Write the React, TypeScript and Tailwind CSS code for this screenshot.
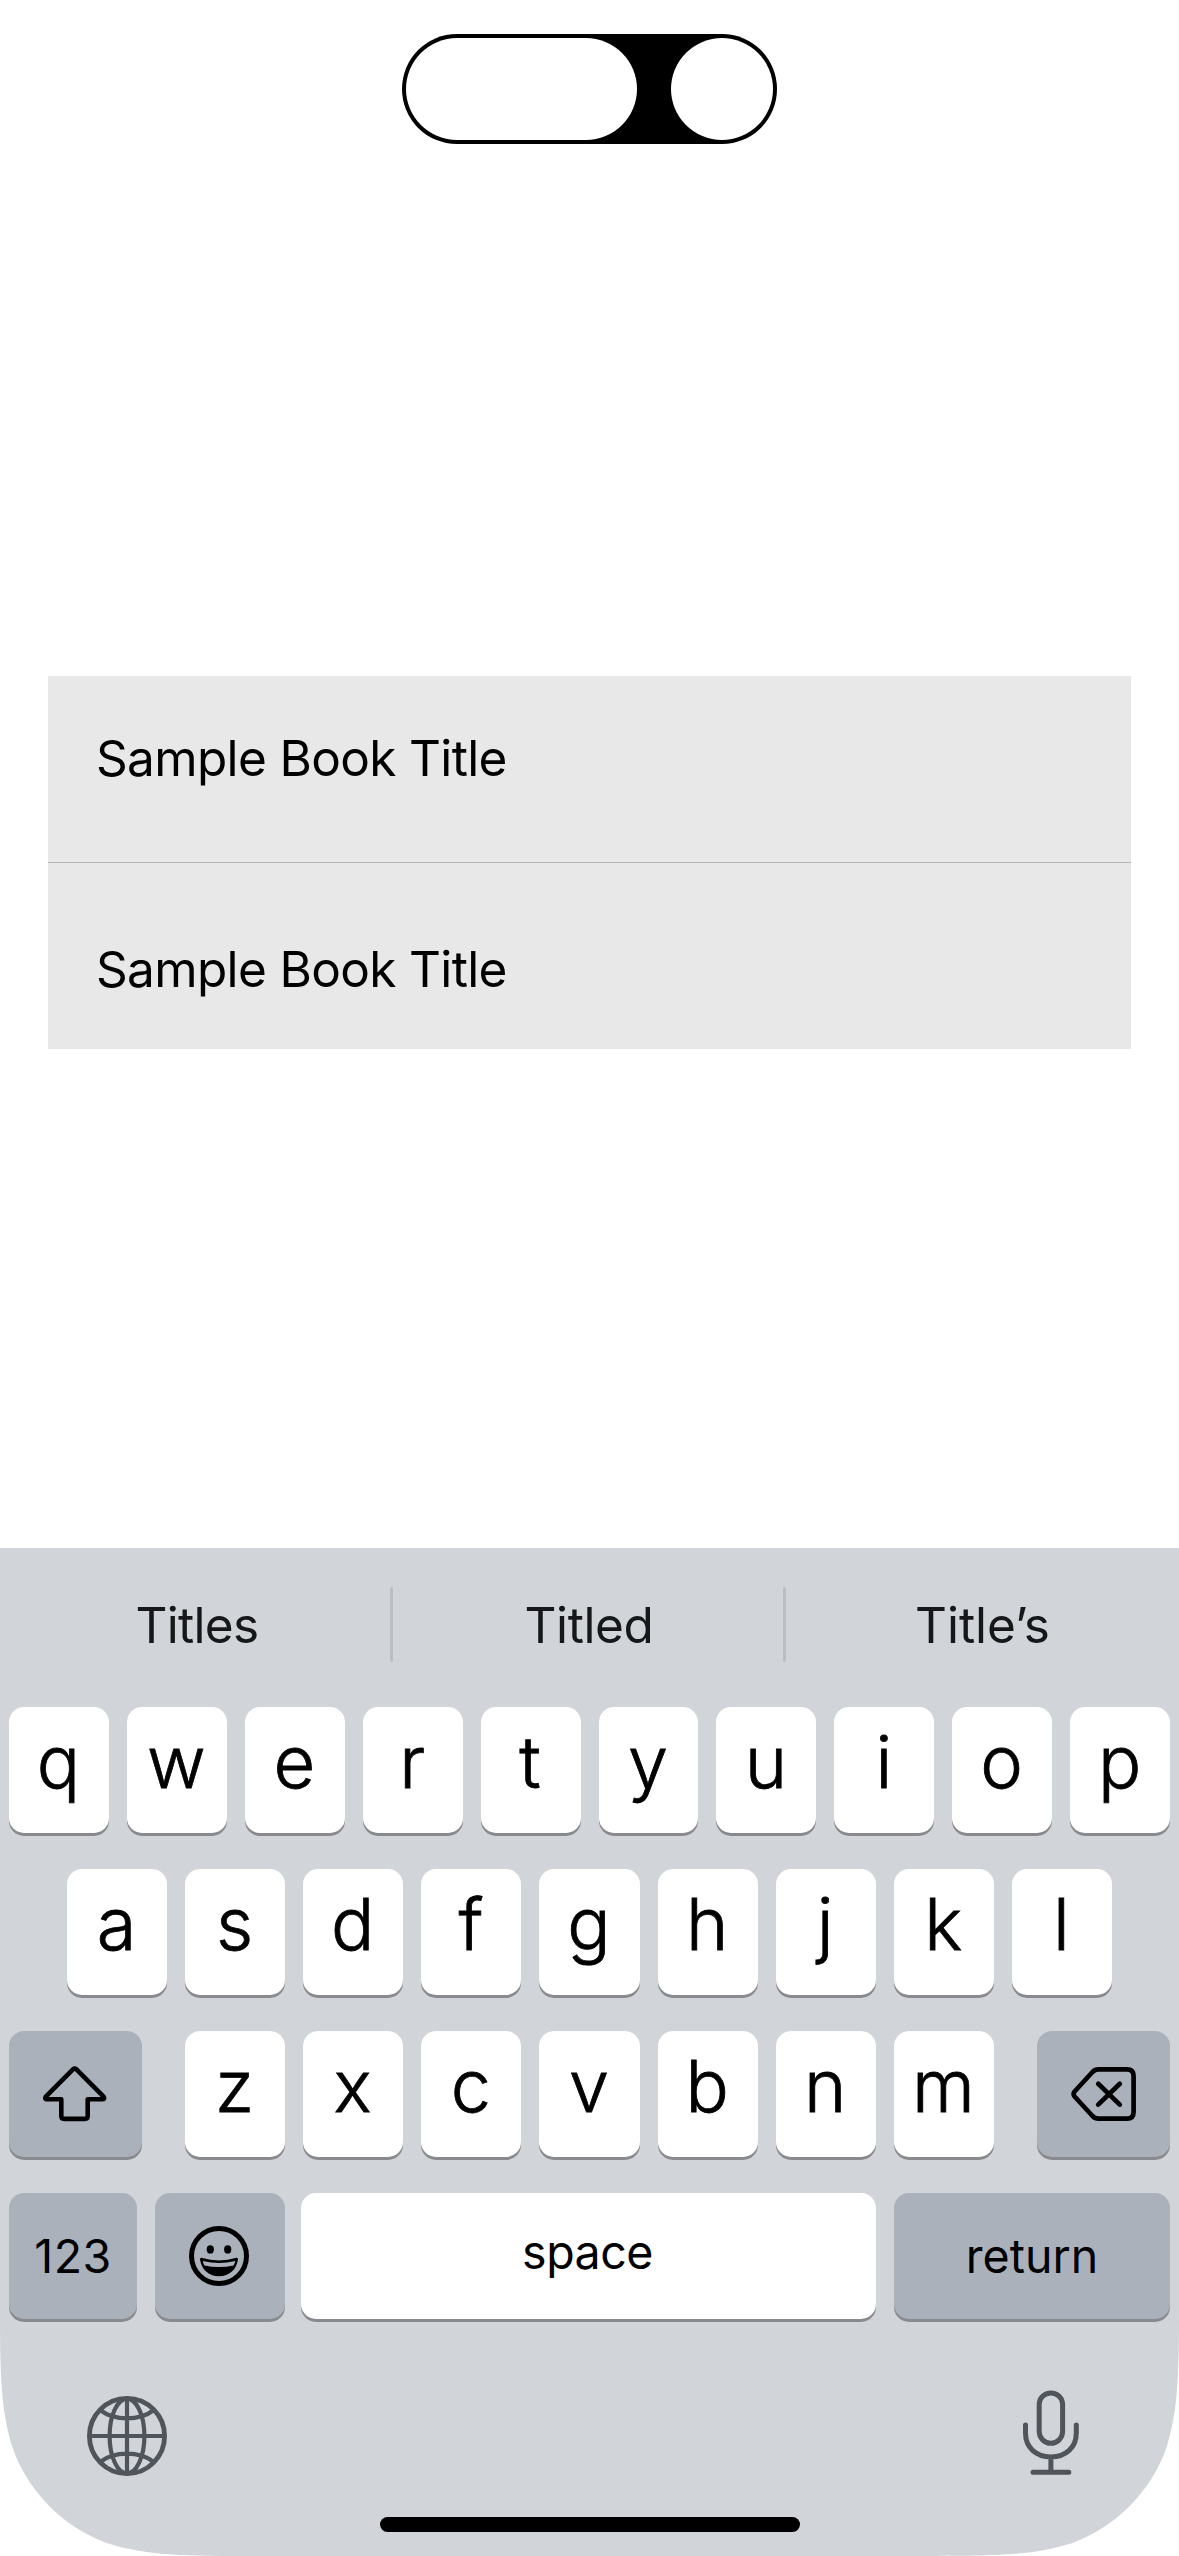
import type { ReactNode } from "react";

function DynamicIsland() {
  return (
    <div className="flex h-[110px] w-[375px] justify-between rounded-full bg-black p-1">
      <div className="h-[102px] w-[231px] rounded-full bg-white" />
      <div className="size-[102px] rounded-full bg-white" />
    </div>
  );
}

function Key({ children, className = "" }: { children: ReactNode; className?: string }) {
  return (
    <button
      className={`flex h-[126px] justify-center rounded-[15px] shadow-[0_3px_0_#898a8d] ${className}`}
    >
      {children}
    </button>
  );
}

function Letters({ keys }: { keys: string }) {
  return (
    <>
      {keys.split("").map((k) => (
        <Key key={k} className="min-w-0 flex-1 bg-white">
          <span className="-ml-px text-[72px] leading-[110px] font-light [-webkit-text-stroke:0.8px_#000]">{k}</span>
        </Key>
      ))}
    </>
  );
}

function ShiftIcon() {
  return (
    <svg width="64" height="56" viewBox="0 0 64 56" fill="none" stroke="#000" strokeWidth="4.6" strokeLinejoin="round">
      <path d="M30.2 3.2Q31.7 1.9 33.2 3.2L60.6 30.6Q62.2 33.2 59.2 33.2H44.7V50Q44.7 52.9 41.8 52.9H21.2Q18.3 52.9 18.3 50V33.2H4.2Q1.2 33.2 2.8 30.6Z" />
    </svg>
  );
}

function BackspaceIcon() {
  return (
    <svg width="65" height="54" viewBox="0 0 65 54" fill="none" stroke="#000" strokeWidth="4.7" strokeLinecap="round" strokeLinejoin="round">
      <path d="M27.5 2.4H56Q62.6 2.4 62.6 9V45Q62.6 51.6 56 51.6H27.5Q24 51.6 21.5 49L3.6 29.5Q1.6 27 3.6 24.5L21.5 5Q24 2.4 27.5 2.4Z" />
      <path d="M27.2 16.8L48.8 37.6M48.8 16.8L27.2 37.6" />
    </svg>
  );
}

function EmojiIcon() {
  return (
    <svg width="60" height="60" viewBox="0 0 60 60">
      <circle cx="30" cy="30" r="27.5" fill="none" stroke="#000" strokeWidth="5" />
      <ellipse cx="21.3" cy="23.4" rx="3.6" ry="4.2" />
      <ellipse cx="38.7" cy="23.4" rx="3.6" ry="4.2" />
      <path
        fillRule="evenodd"
        d="M12.5 31.8Q30 37 47.5 31.8Q49.3 31.6 49 33.5C47.5 43.5 40.5 50.2 30 50.2C19.5 50.2 12.5 43.5 11 33.5Q10.7 31.6 12.5 31.8ZM13.9 34.9Q30 39 46.1 34.9Q46 37.5 44.6 39.6Q30 42.6 15.4 39.6Q14 37.5 13.9 34.9Z"
      />
    </svg>
  );
}

function GlobeIcon() {
  return (
    <svg width="80" height="80" viewBox="0 0 80 80" fill="none" stroke="#50555c" strokeWidth="4.2">
      <circle cx="40" cy="40" r="37.6" strokeWidth="4.8" />
      <ellipse cx="40" cy="40" rx="17.4" ry="37.2" />
      <path d="M40 2V78M2 40H78M13 14Q24 22.3 40 22.3Q56 22.3 67 14M13 66Q24 57.7 40 57.7Q56 57.7 67 66" />
    </svg>
  );
}

function MicIcon() {
  return (
    <svg width="56" height="85" viewBox="0 0 56 85" fill="none" stroke="#50555c" strokeWidth="5" strokeLinecap="round">
      <rect x="16.2" y="2.9" width="23.4" height="50.4" rx="11.7" />
      <path d="M2.5 35V43C2.5 57.5 13 66.9 27.9 66.9C42.8 66.9 53.3 57.5 53.3 43V35M27.9 67V82M10 82.2H45.8" />
    </svg>
  );
}

/* Continuous-curvature cut-out for the bottom-left screen corner. */
function ScreenCorner({ className }: { className: string }) {
  return (
    <svg width="261" height="261" viewBox="0 0 253 253" className={`absolute bottom-0 ${className}`}>
      <path fill="#fff" d="M0 .8C0 73.4 0 109.7 12.4 148.8C27.9 191.5 61.5 225.1 104.2 240.6C143.3 253 179.6 253 252.2 253H0Z" />
    </svg>
  );
}

function Keyboard() {
  return (
    <div className="relative h-[1008px] bg-[#d1d4d9]">
      <ScreenCorner className="left-0" />
      <ScreenCorner className="right-0 -scale-x-100" />

      <div className="flex h-[159px] text-center text-[49.5px] leading-[154px] text-[#161718]">
        <div className="w-[390px] pl-[4px] tracking-[-0.7px]">Titles</div>
        <div className="mt-[39px] h-[75px] w-[3px] rounded-full bg-[#bbbec3]" />
        <div className="w-[390px] pl-[2px] tracking-[-0.4px]">Titled</div>
        <div className="mt-[39px] h-[75px] w-[3px] rounded-full bg-[#bbbec3]" />
        <div className="flex-1">Title’s</div>
      </div>

      <div className="relative flex flex-col gap-9">
        <div className="flex gap-[18px] px-[9px]">
          <Letters keys="qwertyuiop" />
        </div>
        <div className="flex gap-[18px] px-[67px]">
          <Letters keys="asdfghjkl" />
        </div>
        <div className="flex justify-between px-[9px]">
          <Key className="w-[133px] items-center bg-[#abb1bb] pr-[2px]">
            <ShiftIcon />
          </Key>
          <div className="flex w-[809px] gap-[18px]">
            <Letters keys="zxcvbnm" />
          </div>
          <Key className="w-[133px] items-center bg-[#abb1bb]">
            <BackspaceIcon />
          </Key>
        </div>
        <div className="flex px-[9px] text-[46.5px]">
          <Key className="w-32 bg-[#abb1bb]">
            <span className="leading-[126px] tracking-[0.5px]">123</span>
          </Key>
          <Key className="ml-[18px] w-[130px] items-center bg-[#abb1bb] pr-[2px]">
            <EmojiIcon />
          </Key>
          <Key className="ml-4 w-[575px] bg-white pr-[2px]">
            <span className="leading-[118px] tracking-[-0.5px]">space</span>
          </Key>
          <Key className="ml-[18px] flex-1 bg-[#abb1bb]">
            <span className="leading-[126px]">return</span>
          </Key>
        </div>
      </div>

      <div className="flex items-start justify-between pt-[71px] pr-[100px] pl-[87px]">
        <div className="pt-[6px]">
          <GlobeIcon />
        </div>
        <MicIcon />
      </div>
      <div className="mx-auto mt-[41px] h-[15px] w-[420px] rounded-full bg-black" />
    </div>
  );
}

export default function App() {
  return (
    <div className="flex h-[2556px] w-[1179px] flex-col overflow-hidden bg-white font-['Inter',sans-serif] text-black">
      <header className="flex h-[676px] items-start justify-center pt-[34px]">
        <DynamicIsland />
      </header>
      <ul className="mx-12 h-[373px] bg-[#e8e8e8] text-[49.5px] leading-[60px] tracking-[-0.65px]">
        <li className="h-[187px] border-b border-[#b5b5b5] pt-[52px] pl-12">Sample Book Title</li>
        <li className="h-[186px] pt-[76px] pl-12">Sample Book Title</li>
      </ul>
      <div className="flex-1" />
      <Keyboard />
    </div>
  );
}
